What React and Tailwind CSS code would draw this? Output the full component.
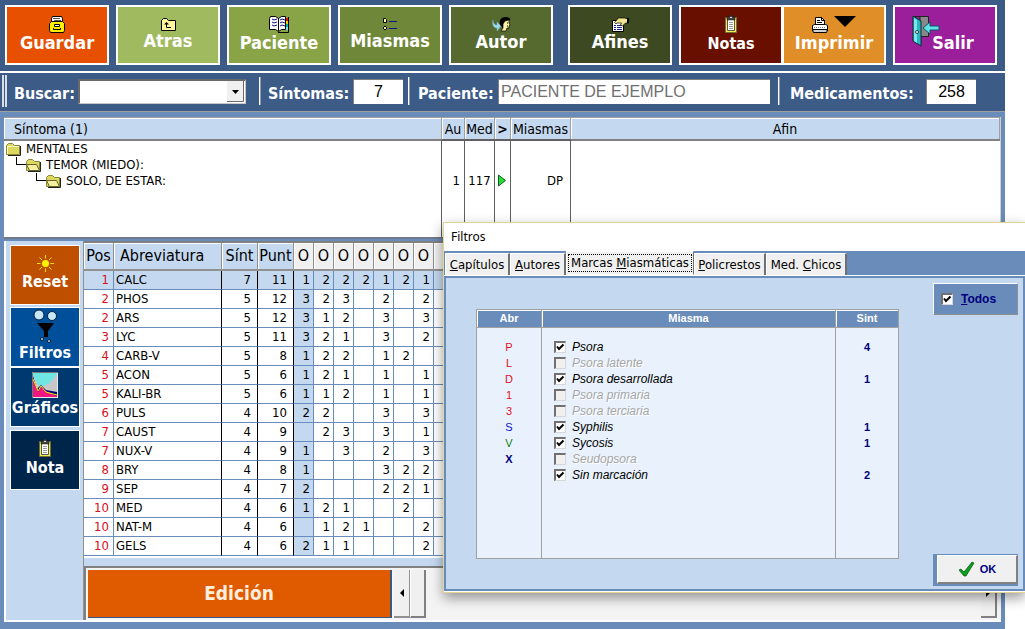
import React, { useState } from 'react';

const REMEDIES = [
  [1, 'CALC', 7, 11, '1', '2', '2', '2', '1', '2', '1'],
  [2, 'PHOS', 5, 12, '3', '2', '3', '', '2', '', '2'],
  [2, 'ARS', 5, 12, '3', '1', '2', '', '3', '', '3'],
  [3, 'LYC', 5, 11, '3', '2', '1', '', '3', '', '2'],
  [4, 'CARB-V', 5, 8, '1', '2', '2', '', '1', '2', ''],
  [5, 'ACON', 5, 6, '1', '2', '1', '', '1', '', '1'],
  [5, 'KALI-BR', 5, 6, '1', '1', '2', '', '1', '', '1'],
  [6, 'PULS', 4, 10, '2', '2', '', '', '3', '', '3'],
  [7, 'CAUST', 4, 9, '', '2', '3', '', '3', '', '1'],
  [7, 'NUX-V', 4, 9, '1', '', '3', '', '2', '', '3'],
  [8, 'BRY', 4, 8, '1', '', '', '', '3', '2', '2'],
  [9, 'SEP', 4, 7, '2', '', '', '', '2', '2', '1'],
  [10, 'MED', 4, 6, '1', '2', '1', '', '', '2', ''],
  [10, 'NAT-M', 4, 6, '', '1', '2', '1', '', '', '2'],
  [10, 'GELS', 4, 6, '2', '1', '1', '', '', '', '2']
];

const MIASMS = [
  { abr: 'P', name: 'Psora', sint: 4, color: 'text-[#e01020]' },
  { abr: 'L', name: 'Psora latente', sint: null, color: 'text-[#e01020]' },
  { abr: 'D', name: 'Psora desarrollada', sint: 1, color: 'text-[#e01020]' },
  { abr: '1', name: 'Psora primaria', sint: null, color: 'text-[#e01020]' },
  { abr: '3', name: 'Psora terciaria', sint: null, color: 'text-[#e01020]' },
  { abr: 'S', name: 'Syphilis', sint: 1, color: 'text-[#1010d0]' },
  { abr: 'V', name: 'Sycosis', sint: 1, color: 'text-[#108020]' },
  { abr: 'X', name: 'Seudopsora', sint: null, color: 'font-bold text-[#000080]' },
  { abr: '', name: 'Sin marcación', sint: 2, color: '' }
];

const DrawerIcon = () => (
  <svg width="16" height="17" viewBox="0 0 16 17" aria-hidden="true">
    <path d="M2.500 6.500v-4l1-2h9l1 2v4z" fill="#fff" stroke="#000" />
    <path d="M4 2.500h7M5 4.500h7" stroke="#555" />
    <path d="M0.500 7.500l2-2h11l2 2v7l-1 2h-13l-1-2z" fill="#ffee00" stroke="#000" />
    <path d="M5.500 8.500h5v2h-5z" fill="#fff" stroke="#000" />
    <path d="M4.500 12v1.500h7V12" fill="none" stroke="#000" />
  </svg>
);

const BackIcon = () => (
  <svg width="15" height="13" viewBox="0 0 15 13" aria-hidden="true">
    <path d="M0.500 12.500v-10l2-2h3l2 2h7v10z" fill="#fff79c" stroke="#000" />
    <path d="M5.500 5v4.500H10" fill="none" stroke="#000" />
    <path d="M3 6.500L5.500 4 8 6.500z" fill="#000" />
  </svg>
);

const BookIcon = () => (
  <svg width="20" height="17" viewBox="0 0 20 17" aria-hidden="true">
    <path d="M1.500 0.500h5l3 2 3-2h4v13h-4l-3 2-3-2h-6v-11z" fill="#fff" stroke="#000" />
    <path d="M9.500 2v13" stroke="#000" />
    <path d="M3 3l2 1 3-1M3 6l2 1 3-1M3 9l2 1 3-1M11 4l2-1 3 1M11 7l2-1 3 1M11 10l2-1 3 1" fill="none" stroke="#101080" />
    <path d="M17 2h2v3h-2z" fill="#e01010" />
    <path d="M17 5h2v3h-2z" fill="#f0d000" />
    <path d="M17 8h2v3h-2z" fill="#00b0a0" />
    <path d="M17 11h2v3h-2z" fill="#80e0ff" />
    <path d="M19.500 1v15.500H9" fill="none" stroke="#000" />
  </svg>
);

const ListIcon = () => (
  <svg width="16" height="13" viewBox="0 0 16 13" aria-hidden="true">
    <path d="M1.500 0.500h2l1 1v3h-3z" fill="#fff79c" stroke="#000" />
    <path d="M3 8l2 2-2 2-2-2z" fill="#fff79c" stroke="#000" />
    <path d="M7 3.500h8M7 10.500h8" stroke="#0a1890" />
  </svg>
);

const AuthorIcon = () => (
  <svg width="19" height="15" viewBox="0 0 19 15" aria-hidden="true">
    <path d="M1 3c0 4 2 5 4 5V5l4 4-4 5v-3C1 11 0 7 1 3z" fill="#9adcec" stroke="#70b0c8" strokeWidth=".5" />
    <path d="M8 8c-1-5 1-8 6-8 3 0 5 2 4 3l-5 1-2 7z" fill="#000" />
    <path d="M13 4l4-1v3l1 2-1 1v2h-2l-1 3H9l2-3V7z" fill="#fff3a6" stroke="#000" strokeWidth=".7" />
    <path d="M15 6h1M16 9h-1" stroke="#000" />
  </svg>
);

const HandIcon = () => (
  <svg width="17" height="15" viewBox="0 0 17 15" aria-hidden="true">
    <path d="M0.500 3.500h11v11h-11z" fill="#fff" stroke="#000" />
    <path d="M2 8.500h2M5 8.500h5M2 10.500h2M5 10.500h5M2 12.500h2M5 12.500h5" stroke="#1a2090" />
    <path d="M2.500 5.500l4-4.500h6l4 1v4h-3l-3 3-2-1 1-2H5l-1 1z" fill="#f0e690" stroke="#000" strokeWidth=".7" />
    <path d="M15 1h2v5h-2z" fill="#000" />
  </svg>
);

const ClipboardIcon = () => (
  <svg width="14" height="19" viewBox="0 0 14 19" aria-hidden="true">
    <path d="M1.500 2.500h11v15h-11z" fill="#f4ef50" stroke="#77702c" />
    <path d="M3.500 4.500h7v11h-7z" fill="#fff" stroke="#555" />
    <path d="M5 7.500h4M5 9.500h4M5 11.500h4M5 13.500h4" stroke="#999" />
    <path d="M3 2h2l1-2h2l1 2h2v3H3z" fill="#444" stroke="#111" strokeWidth=".5" />
    <path d="M6 2h2v1H6z" fill="#ddd" />
  </svg>
);

const PrinterIcon = () => (
  <svg width="44" height="17" viewBox="0 0 44 17" aria-hidden="true">
    <path d="M3.500 8.500v-7h6l3 3v4z" fill="#fff" stroke="#000" />
    <path d="M5 4.500h3M5 6.500h5M9.500 1v3.500H13" fill="none" stroke="#000" />
    <path d="M0.500 9.500l2-1h11l2 1v5h-15z" fill="#fff" stroke="#000" />
    <path d="M2 11.500h12" stroke="#777" strokeDasharray="1 1" />
    <path d="M0.500 13.500h15l-1 3h-13z" fill="#d0d0d8" stroke="#000" />
    <path d="M22 0h22L33 11z" fill="#000" />
  </svg>
);

const DoorIcon = () => (
  <svg width="28" height="32" viewBox="0 0 28 32" aria-hidden="true">
    <path d="M2 1.500h14.500v20H8V1" fill="#888" stroke="#222" />
    <path d="M1 1l8 5v25l-8-5z" fill="#25b8c4" stroke="#062b30" />
    <path d="M2 3l3 2v23l-3-2z" fill="#7ee5ea" />
    <circle cx="5" cy="17" r="1.500" fill="#fff" stroke="#000" strokeWidth=".7" />
    <path d="M11 13l7-6v4h9v4h-9v4z" fill="#62e0ea" stroke="#0a5563" />
  </svg>
);

const SunIcon = () => (
  <svg width="17" height="17" viewBox="0 0 17 17" aria-hidden="true">
    <path d="M8.500 0v17M0 8.500h17M2.500 2.500l12 12M14.500 2.500l-12 12" stroke="#ffe400" />
    <circle cx="8.500" cy="8.500" r="5" fill="#be4f00" />
    <circle cx="8.500" cy="8.500" r="3.500" fill="#fff200" />
  </svg>
);

const FunnelIcon = () => (
  <svg width="24" height="34" viewBox="0 0 24 34" aria-hidden="true">
    <circle cx="6" cy="6" r="5" fill="#c6e8f6" stroke="#001b38" />
    <circle cx="19" cy="7" r="4.500" fill="#c6e8f6" stroke="#001b38" />
    <path d="M4 14h17l-6 8v6h-4v-6z" fill="#000" />
    <circle cx="9" cy="30" r="1.500" fill="#c6e8f6" stroke="#001b38" />
    <circle cx="16" cy="32" r="1.500" fill="#c6e8f6" stroke="#001b38" />
  </svg>
);

const ChartIcon = () => (
  <svg width="26" height="26" viewBox="0 0 26 26" aria-hidden="true">
    <path d="M0 0h26v26H0z" fill="#e8e8e8" />
    <path d="M1 1h24v24H1z" fill="#6fe6e2" />
    <path d="M1 3l5 10 5 1 7-3 7-9v23H1z" fill="#c8c8c8" />
    <path d="M1 4l4 13 4-4 5 5 11 2v5H1z" fill="#000078" />
    <path d="M1 8l5 12 3-5 6 5 10 4v1H1z" fill="#f01880" />
    <path d="M1 7l5 12 3-5 5 6 11 3" fill="none" stroke="#fff200" />
    <path d="M0.500 26V0.500H26" fill="none" stroke="#777" />
  </svg>
);

const FolderIcon = ({ open }) => (
  <svg width="16" height="13" viewBox="0 0 16 13" aria-hidden="true" className="shrink-0">
    <path d="M0.500 11.500v-9l2-2h4l2 2h5v9z" fill="#dcd860" stroke="#8a873c" />
    {open ? (
      <path d="M0.500 5.500h10l3 6h-10z" fill="#f4f0a0" stroke="#66642a" />
    ) : (
      <path d="M1.500 11V3.500H13" fill="none" stroke="#fbf9c4" />
    )}
    <path d="M14.500 3v9.500H2" fill="none" stroke="#222" />
  </svg>
);

const TOOLS = [
  { label: 'Guardar', Icon: DrawerIcon, box: 'bg-[#e65000]' },
  { label: 'Atras', Icon: BackIcon, box: 'bg-[#9fba5f]' },
  { label: 'Paciente', Icon: BookIcon, box: 'bg-[#89a347]' },
  { label: 'Miasmas', Icon: ListIcon, box: 'bg-[#6f8738]' },
  { label: 'Autor', Icon: AuthorIcon, box: 'bg-[#566a2f]' },
  { label: 'Afines', Icon: HandIcon, box: 'bg-[#3d4920] ml-2' },
  { label: 'Notas', Icon: ClipboardIcon, box: 'bg-[#690f00] text-base leading-5' },
  { label: 'Imprimir', Icon: PrinterIcon, box: 'bg-[#e08e27] -ml-2' }
];

const SIDE_TOOLS = [
  { label: 'Reset', Icon: SunIcon, box: 'bg-[#be4f00] mb-[2px] pb-1' },
  { label: 'Filtros', Icon: FunnelIcon, box: 'bg-[#004f9b] pb-[2px]' },
  { label: 'Gráficos', Icon: ChartIcon, box: 'bg-[#003870] mb-[3px] pb-1' },
  { label: 'Nota', Icon: ClipboardIcon, box: 'bg-[#00254b] pb-1' }
];

const Toolbar = () => (
  <nav className="flex h-[73px] gap-[7px] border-b-2 border-white bg-[#3d5b87] pt-[5px] pr-2 pb-[6px] pl-[5px] text-lg leading-5 font-bold text-white">
    {TOOLS.map(({ label, Icon, box }) => (
      <button key={label} type="button" className={`${box} flex flex-1 basis-0 flex-col items-center justify-center border-2 border-white pb-[2px]`}>
        <Icon />
        {label}
      </button>
    ))}
    <button type="button" className="flex flex-1 basis-0 items-center justify-center border-2 border-white bg-[#9b1f9b]">
      <span className="-mr-2 pb-2">
        <DoorIcon />
      </span>
      <span className="pt-4 pr-1">Salir</span>
    </button>
  </nav>
);

const Separator = () => <span className="h-7 w-[2px] shrink-0 border-l border-white bg-[#8c9bb3]" />;

const SearchBar = () => {
  const field = 'h-[25px] border-t border-l border-[#808080] bg-white font-["Liberation_Sans"] text-base leading-5 font-normal';

  return (
    <div className="flex h-[39px] items-center border-b border-[#a0a0a0] bg-[#3d5b87] pb-[2px] pl-[2px] text-base font-bold text-white">
      <span className="h-8 w-[5px] shrink-0 border-x-2 border-[#d8dde6]" />
      <label htmlFor="buscar" className="ml-[7px] w-16 shrink-0 pt-[6px]">Buscar:</label>
      <div className="relative h-[25px] w-[168px] shrink-0">
        <select id="buscar" className="h-full w-full appearance-none border border-t-2 border-l-2 border-[#c8c8c8] border-t-[#696969] border-l-[#696969] bg-white text-black">
          <option value=""></option>
        </select>
        <svg className="pointer-events-none absolute top-[2px] right-[2px]" width="17" height="21" viewBox="0 0 17 21" aria-hidden="true">
          <path d="M0 0h17v21H0z" fill="#f0f0f0" />
          <path d="M16.500 0v20.500H0" fill="none" stroke="#696969" />
          <path d="M5 9h7l-3.500 4z" fill="#000" />
        </svg>
      </div>
      <span className="w-[13px]" />
      <Separator />
      <label htmlFor="sintomas" className="ml-[7px] w-[85px] shrink-0 pt-[6px]">Síntomas:</label>
      <input id="sintomas" readOnly defaultValue="7" className={`${field} w-[50px] text-center text-black`} />
      <span className="w-[5px]" />
      <Separator />
      <label htmlFor="paciente" className="ml-2 w-20 shrink-0 pt-[6px]">Paciente:</label>
      <input id="paciente" readOnly defaultValue="PACIENTE DE EJEMPLO" className={`${field} min-w-0 flex-1 pl-[2px] text-[#707070]`} />
      <span className="w-2" />
      <Separator />
      <label htmlFor="medicamentos" className="ml-[10px] w-[136px] shrink-0 pt-[6px]">Medicamentos:</label>
      <input id="medicamentos" readOnly defaultValue="258" className={`${field} mr-[29px] w-[50px] text-center text-black`} />
    </div>
  );
};

const SymptomTable = () => {
  const th = 'border-r border-t border-[#a0a0a0] bg-[#c4d9f0] p-0 font-normal shadow-[inset_1px_1px_0_#ffffff]';
  const td = 'border-r border-[#606060] p-0 pr-1 text-right';

  return (
    <div className="mt-[5px] mr-1 h-[122px] overflow-hidden border-r border-b-2 border-r-[#d0d0d0] border-b-[#707a88] bg-white">
      <table className="w-full table-fixed border-separate border-spacing-0 text-[13px]">
        <colgroup>
          <col className="w-[438px]" />
          <col className="w-[23px]" />
          <col className="w-[30px]" />
          <col className="w-[16px]" />
          <col className="w-[60px]" />
          <col />
        </colgroup>
        <thead className="text-sm">
          <tr className="h-[22px]">
            <th className={`${th} pl-[10px] text-left`}>Síntoma (1)</th>
            <th className={th}>Au</th>
            <th className={th}>Med</th>
            <th className={th}><b>&gt;</b></th>
            <th className={th}>Miasmas</th>
            <th className={th}>Afin</th>
          </tr>
        </thead>
        <tbody>
          <tr className="h-[18px]">
            <td className="border-t-2 border-r border-[#808080] border-r-[#606060] p-0">
              <div className="flex items-center gap-1 pl-[2px] leading-4"><FolderIcon />MENTALES</div>
            </td>
            <td className={`${td} border-t-2`} />
            <td className={`${td} border-t-2`} />
            <td className={`${td} border-t-2`} />
            <td className={`${td} border-t-2`} />
            <td className="border-t-2 border-[#808080] p-0" />
          </tr>
          <tr className="h-4">
            <td className="border-r border-[#606060] p-0">
              <div className="flex items-center gap-1 pl-3 leading-4">
                <span className="-mr-1 mb-2 h-2 w-[10px] border-b border-l border-black" />
                <FolderIcon open />TEMOR (MIEDO):
              </div>
            </td>
            <td className={td} /><td className={td} /><td className={td} /><td className={td} /><td />
          </tr>
          <tr className="h-4">
            <td className="border-r border-[#606060] p-0">
              <div className="flex items-center gap-1 pl-8 leading-4">
                <span className="-mr-1 mb-2 h-2 w-[10px] border-b border-l border-black" />
                <FolderIcon open />SOLO, DE ESTAR:
              </div>
            </td>
            <td className={`${td} leading-4`}>1</td>
            <td className="border-r border-[#606060] p-0 text-center leading-4">117</td>
            <td className={td}>
              <svg width="9" height="14" viewBox="0 0 9 14" aria-label="Ver" className="ml-[3px]">
                <path d="M0.500 1l7 5.500-7 5.500z" fill="#22e036" stroke="#145c1c" />
              </svg>
            </td>
            <td className={`${td} pr-[7px] leading-4`}>DP</td>
            <td />
          </tr>
          <tr className="h-[48px]">
            <td className={td} /><td className={td} /><td className={td} /><td className={td} /><td className={td} /><td />
          </tr>
        </tbody>
      </table>
    </div>
  );
};

const RemedyTable = () => {
  const th = 'border-r border-b-2 border-[#909090] p-0 font-normal shadow-[inset_1px_1px_0_#ffffff]';
  const line = 'border-b border-[#6a8cba] p-0';

  return (
    <table className="w-full table-fixed border-separate border-spacing-0 border-t-2 border-[#808080] bg-white text-[13px] leading-4">
      <colgroup>
        <col className="w-[30px]" />
        <col className="w-[108px]" />
        <col className="w-9" />
        <col className="w-9" />
        {Array.from({ length: 7 }, (_, i) => <col key={i} className="w-5" />)}
        <col />
      </colgroup>
      <thead className="text-base leading-5">
        <tr className="h-7">
          <th className={`${th} bg-[#c4d9f0]`}>Pos</th>
          <th className={`${th} bg-[#c4d9f0] pl-[6px] text-left`}>Abreviatura</th>
          <th className={`${th} bg-[#c4d9f0]`}>Sínt</th>
          <th className={`${th} bg-[#c4d9f0]`}>Punt</th>
          {Array.from({ length: 7 }, (_, i) => <th key={i} className={`${th} bg-[#f0f0f0]`}>O</th>)}
          <th className={`${th} bg-[#f0f0f0]`} />
        </tr>
      </thead>
      <tbody>
        {REMEDIES.map(([pos, abbr, sint, punt, ...marks], row) => (
          <tr key={abbr} className={`h-[19px] ${row === 0 ? 'bg-[#c4d9f0]' : ''}`}>
            <td className={`${line} border-r pr-1 text-right text-[#d81020]`}>{pos}</td>
            <td className={`${line} border-r border-r-black pl-[2px]`}>{abbr}</td>
            <td className={`${line} border-r border-r-black pr-[6px] text-right`}>{sint}</td>
            <td className={`${line} border-r border-r-black pr-[6px] text-right`}>{punt}</td>
            {marks.map((mark, i) => (
              <td key={i} className={`${line} border-r pr-[3px] text-right ${i === 0 ? 'bg-[#c4d9f0]' : ''}`}>{mark}</td>
            ))}
            <td className={line} />
          </tr>
        ))}
      </tbody>
    </table>
  );
};

const Sidebar = () => (
  <aside className="flex w-[77px] shrink-0 flex-col bg-[#c4d9f0] pt-1 pr-[3px] pl-1 text-base leading-5 font-bold text-white">
    {SIDE_TOOLS.map(({ label, Icon, box }) => (
      <button key={label} type="button" className={`${box} flex h-[60px] flex-col items-center justify-center border border-white`}>
        <Icon />
        {label}
      </button>
    ))}
  </aside>
);

const EditBar = () => (
  <div className="flex grow flex-col border-t-2 border-white bg-[#c4d9f0] pt-2">
    <div className="flex h-[54px] border-t-2 border-l-2 border-[#808080] bg-[#f4f4f4] pt-[2px] pr-1 pb-[2px] pl-[2px]">
      <button type="button" className="w-[304px] shrink-0 border-r-2 border-b border-[#3c5a80] bg-[#e05a00] text-[19px] font-bold text-[#ffeedd]">
        Edición
      </button>
      <button type="button" aria-label="Anterior" className="ml-[2px] flex w-4 items-center justify-center border-r border-b-2 border-[#909090] bg-[#f0f0f0]">
        <svg width="4" height="8" viewBox="0 0 4 8"><path d="M4 0v8L0 4z" fill="#000" /></svg>
      </button>
      <span className="w-4 border-r-2 border-b-2 border-l border-[#808080] border-l-white bg-[#f0f0f0]" />
      <span className="grow" />
      <button type="button" aria-label="Siguiente" className="flex w-4 items-center justify-center border-r-2 border-b-2 border-[#808080] bg-[#f0f0f0]">
        <svg width="4" height="8" viewBox="0 0 4 8"><path d="M0 0v8l4-4z" fill="#000" /></svg>
      </button>
    </div>
  </div>
);

const CheckBox = ({ id, checked, disabled, onChange }) => (
  <span className="grid shrink-0">
    <input
      id={id}
      type="checkbox"
      checked={checked}
      disabled={disabled}
      onChange={onChange}
      className="col-start-1 row-start-1 size-3 appearance-none border border-t-2 border-l-2 border-[#d8d8d8] border-t-[#707070] border-l-[#707070] bg-white disabled:bg-[#f0f0f0]"
    />
    {checked ? (
      <svg className="pointer-events-none col-start-1 row-start-1" width="12" height="12" viewBox="0 0 12 12">
        <path d="M3 5.500l2 2.500 4.500-4.500" fill="none" stroke="#000" strokeWidth="2" />
      </svg>
    ) : null}
  </span>
);

const FilterTabs = () => {
  const tab = 'flex h-[22px] items-center border-t border-r-2 border-l border-white border-r-[#707070] bg-[#f0f0f0] whitespace-nowrap';

  return (
    <div className="flex h-[25px] shrink-0 items-end border-t-2 border-b border-[#6a8cba] border-b-white bg-[#6a8cba] pl-px text-[13px] leading-4">
      <button type="button" className={`${tab} w-[65px] justify-center`}><span><u>C</u>apítulos</span></button>
      <button type="button" className={`${tab} w-[56px] justify-center`}><span><u>A</u>utores</span></button>
      <button type="button" className="flex h-[24px] w-[128px] items-center justify-center border border-white border-r-[#707070] bg-[#f0f0f0] p-px whitespace-nowrap">
        <span className="border border-dotted border-black px-[2px]">Marcas <u>M</u>iasmáticas</span>
      </button>
      <button type="button" className={`${tab} w-[72px] justify-center`}><span><u>P</u>olicrestos</span></button>
      <button type="button" className={`${tab} w-[81px] justify-center`}><span>Med. <u>C</u>hicos</span></button>
    </div>
  );
};

const FilterDialog = () => {
  const [checked, setChecked] = useState(() => MIASMS.map((m) => m.sint !== null));
  const allChecked = MIASMS.every((m, i) => m.sint === null || checked[i]);

  const toggle = (index) => setChecked(checked.map((value, i) => (i === index ? !value : value)));
  const toggleAll = () => setChecked(MIASMS.map((m) => m.sint !== null && !allChecked));

  const th = 'h-[19px] border-t border-r border-b border-[#a0a0a0] bg-[#6a8cba] p-0 text-[11px] text-white shadow-[inset_1px_1px_0_#ffffff]';
  const td = 'border-r border-[#a0a0a0] p-0';

  return (
    <section
      role="dialog"
      aria-labelledby="filtros-title"
      className="absolute top-[222px] right-0 left-[443px] flex h-[371px] flex-col border border-r-0 border-[#e2d494] bg-white pb-px shadow-[0_5px_12px_rgba(0,0,0,0.4)]"
    >
      <h2 id="filtros-title" className="h-7 shrink-0 pl-[7px] font-['Noto_Sans'] text-xs leading-7">Filtros</h2>
      <FilterTabs />
      <div className="flex grow justify-between border-2 border-[#6a8cba] bg-[#c4d9f0] font-['Liberation_Sans']">
        <table className="mt-[31px] mb-[30px] ml-[30px] w-[423px] table-fixed border-separate border-spacing-0 border-b border-l border-[#a0a0a0] bg-[#e9f2fc]">
          <colgroup>
            <col className="w-[65px]" />
            <col />
            <col className="w-[63px]" />
          </colgroup>
          <thead>
            <tr>
              <th className={th}>Abr</th>
              <th className={th}>Miasma</th>
              <th className={th}>Sint</th>
            </tr>
          </thead>
          <tbody className="text-[11px] leading-4">
            <tr className="h-[11px]"><td className={td} /><td className={td} /><td className={td} /></tr>
            {MIASMS.map((m, i) => (
              <tr key={m.name} className="h-4">
                <td className={`${td} text-center ${m.color}`}>{m.abr}</td>
                <td className={`${td} pl-3`}>
                  <div className="flex h-4 items-center gap-[6px]">
                    <CheckBox id={`miasma-${i}`} checked={checked[i]} disabled={m.sint === null} onChange={() => toggle(i)} />
                    <label
                      htmlFor={`miasma-${i}`}
                      className={`text-xs italic ${m.sint === null ? 'text-[#a6a6a6] [text-shadow:1px_1px_0_#ffffff]' : 'text-black'}`}
                    >
                      {m.name}
                    </label>
                  </div>
                </td>
                <td className={`${td} text-center font-bold text-[#000080]`}>{m.sint}</td>
              </tr>
            ))}
            <tr><td className={td} /><td className={td} /><td className={td} /></tr>
          </tbody>
        </table>
        <div className="flex flex-col justify-between pt-[5px] pr-[5px] pb-[3px] text-xs font-bold text-[#000080]">
          <div className="flex h-8 w-[85px] items-center gap-2 border border-white border-r-[#909090] border-b-[#909090] bg-[#6a8cba] pl-[7px]">
            <CheckBox id="todos" checked={allChecked} onChange={toggleAll} />
            <label htmlFor="todos"><u>T</u>odos</label>
          </div>
          <div className="h-8 w-[85px] bg-[#6a8cba] pt-px pb-[2px] pl-1">
            <button type="button" className="flex h-full w-full items-center justify-center gap-1 border border-r-2 border-b-2 border-white border-r-[#808080] border-b-[#808080] bg-[#f0f0f0] text-[11px]">
              <svg width="18" height="16" viewBox="0 0 18 16" aria-hidden="true">
                <path d="M1 9l2-1 3 3 8-10 2 1-8 13H6z" fill="#08a01c" stroke="#045010" strokeWidth=".7" />
              </svg>
              OK
            </button>
          </div>
        </div>
      </div>
    </section>
  );
};

const App = () => (
  <div className="relative min-h-screen bg-white pr-5 font-['DejaVu_Sans_Condensed','DejaVu_Sans',sans-serif] text-black">
    <main className="flex min-h-screen flex-col bg-[#6a8cba]">
      <Toolbar />
      <SearchBar />
      <div className="flex grow flex-col pb-[7px] pl-1">
        <SymptomTable />
        <div className="mt-[2px] mr-1 flex grow border-b-2 border-l-2 border-white">
          <Sidebar />
          <div className="flex min-w-0 grow flex-col border-l border-[#909090]">
            <RemedyTable />
            <EditBar />
          </div>
        </div>
      </div>
    </main>
    <FilterDialog />
  </div>
);

export default App;
